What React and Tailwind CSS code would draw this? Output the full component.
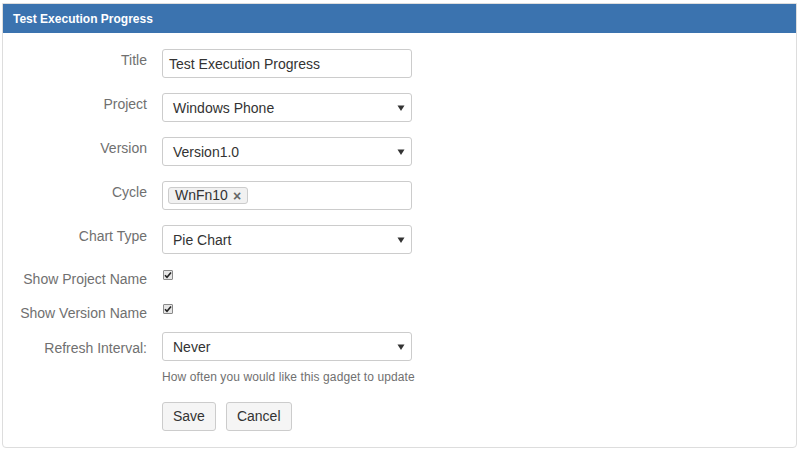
import React from "react";

const font = { fontFamily: '"Liberation Sans", Arial, sans-serif' };

const Caret = () => (
  <svg width="8" height="8" viewBox="0 0 8 8" className="shrink-0">
    <path d="M0.5 1.5 L7.5 1.5 L4 7 Z" fill="#333" />
  </svg>
);

const Label = ({ children, className = "" }) => (
  <div className={`w-[144px] shrink-0 text-right text-[14px] leading-[20px] text-[#707070] ${className}`}>
    {children}
  </div>
);

const TextInput = ({ value }) => (
  <div className="w-[250px] h-[29px] border border-[#cccccc] rounded-[3px] bg-white flex items-center pl-[6px] pt-[1px] text-[14px] text-[#333]">
    {value}
  </div>
);

const Select = ({ value }) => (
  <div className="w-[250px] h-[29px] border border-[#cccccc] rounded-[3px] bg-white flex items-center justify-between pl-[10px] pr-[6px] pt-[1px] text-[14px] text-[#333]">
    <span>{value}</span>
    <Caret />
  </div>
);

const Check = () => (
  <div className="w-[10px] h-[10px] mt-[1px] ml-[1px] border border-[#8a8a8a] rounded-[1px] bg-[#e6e6e6] flex items-center justify-center">
    <svg width="8" height="8" viewBox="0 0 8 8">
      <path d="M1 4.2 L3 6.3 L7 1.5" stroke="#222" strokeWidth="1.6" fill="none" />
    </svg>
  </div>
);

const Row = ({ label, children, className = "", labelClass = "pt-[1px]" }) => (
  <div className={`flex gap-[15px] ${className}`}>
    <Label className={labelClass}>{label}</Label>
    {children}
  </div>
);

const App = () => {
  return (
    <div className="w-[801px] h-[453px] bg-white pl-[2px] pt-[3px]" style={font}>
      <div className="w-[795px] h-[445px] border border-[#dddddd] rounded-b-[4px] bg-white">
        <div className="h-[29px] bg-[#3b73af] text-white font-bold text-[12px] flex items-center pl-[10px]">
          Test Execution Progress
        </div>
        <div className="pt-[16px]">
          <Row label="Title" className="mb-[15px]">
            <TextInput value="Test Execution Progress" />
          </Row>
          <Row label="Project" className="mb-[15px]">
            <Select value="Windows Phone" />
          </Row>
          <Row label="Version" className="mb-[15px]">
            <Select value="Version1.0" />
          </Row>
          <Row label="Cycle" className="mb-[15px]">
            <div className="w-[250px] h-[29px] border border-[#cccccc] rounded-[3px] bg-white flex items-center pl-[5px]">
              <span className="h-[17px] flex items-center gap-[5px] pl-[6px] pr-[6px] border border-[#cccccc] rounded-[3px] bg-[#f1f1f1] text-[14px] text-[#333]">
                WnFn10
                <span className="text-[14px] font-bold text-[#666] leading-none">×</span>
              </span>
            </div>
          </Row>
          <Row label="Chart Type" className="mb-[15px]">
            <Select value="Pie Chart" />
          </Row>
          <Row label="Show Project Name" className="mb-[14px]" labelClass="pt-0">
            <Check />
          </Row>
          <Row label="Show Version Name" className="mb-[9px]" labelClass="pt-0">
            <Check />
          </Row>
          <Row label="Refresh Interval:" labelClass="pt-[6px]">
            <div>
              <Select value="Never" />
              <div className="mt-[8px] text-[12px] leading-[17px] tracking-[0.1px] text-[#707070]">
                How often you would like this gadget to update
              </div>
              <div className="mt-[16px] flex gap-[10px]">
                <button className="h-[29px] px-[10px] border border-[#cccccc] rounded-[3px] bg-[#f5f5f5] text-[14px] text-[#333]">
                  Save
                </button>
                <button className="h-[29px] px-[10px] border border-[#cccccc] rounded-[3px] bg-[#f5f5f5] text-[14px] text-[#333]">
                  Cancel
                </button>
              </div>
            </div>
          </Row>
        </div>
      </div>
    </div>
  );
};

export default App;
